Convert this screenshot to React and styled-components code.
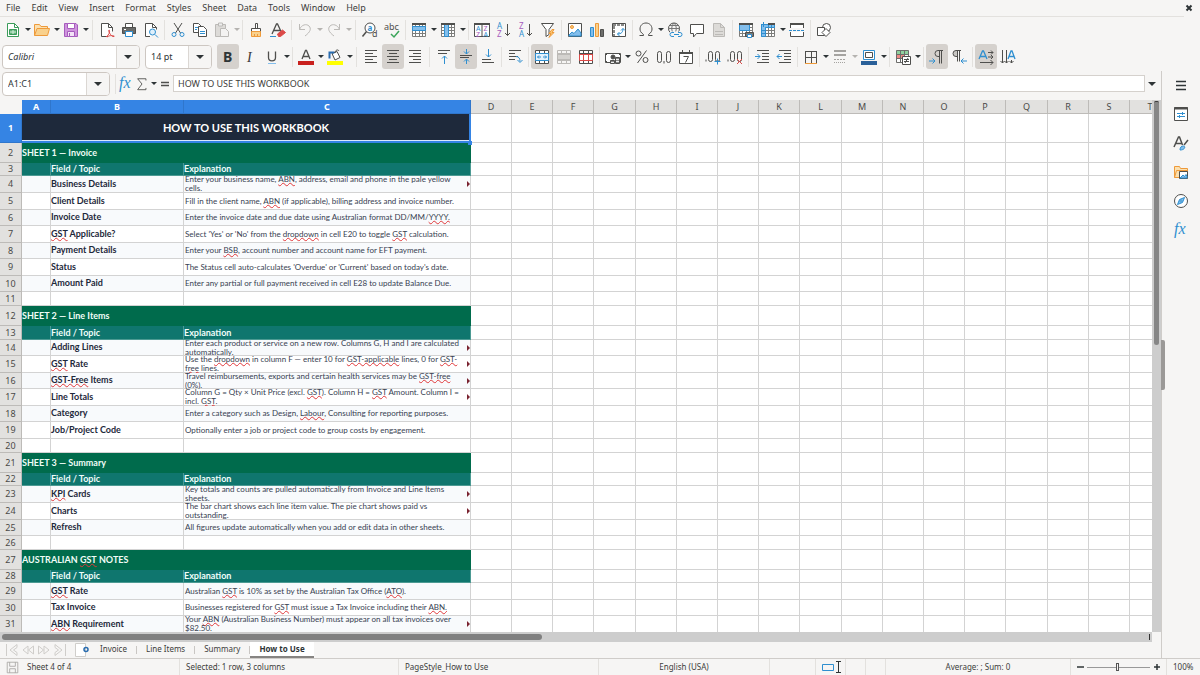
import React from "react";
import styled, { createGlobalStyle, css } from "styled-components";

const GlobalStyle = createGlobalStyle`
  * { box-sizing: border-box; }
  body { margin: 0; background: #f6f5f4; }
  button, input { font: inherit; color: inherit; }
`;

const INK = "#4f4f4d";
const BLUE = "#2f8fd0";
const SOFT = "#83beec";
const ORANGE = "#ee9a3a";
const PURPLE = "#a65cbd";
const RED = "#dc4a48";
const FADED = "#bcbab7";

/* ---------- icons ---------- */

const grid = (
  <path d="M1.5 2.5h13v12h-13zM1.5 5.5h13M1.5 8.5h13M1.5 11.5h13M4.5 2.5v12M8.5 2.5v12M11.5 2.5v12" stroke="#7d7d7b" />
);

const letter = (x, y, size, fill, text, extra) => (
  <text x={x} y={y} fontSize={size} fill={fill} stroke="none" fontFamily="'Noto Sans', sans-serif" {...extra}>
    {text}
  </text>
);

const icons = {
  newDoc: (
    <>
      <path d="M2.500 1.500h7l4 4v9h-11z" fill="#fff" stroke="#3b9c5a" />
      <path d="M9.500 1.500v4h4" stroke="#3b9c5a" />
      <path d="M4.500 7.500h7v5h-7z" fill="#5db077" stroke="#3b9c5a" />
      <path d="M5 10h6M8 8v4" stroke="#d7efdd" />
    </>
  ),
  open: (
    <>
      <path d="M.5 13.500v-11h5l1.500 2h6.500v3" fill="#fbe0b0" stroke={ORANGE} />
      <path d="M.5 13.500l2.500-7h12.500l-2 7z" fill="#f9d18d" stroke={ORANGE} />
    </>
  ),
  save: (
    <>
      <path d="M1.500 1.500h11.500l1.500 1.500v11.500h-13z" fill="#cf94dd" stroke={PURPLE} />
      <path d="M4.500 1.500h7v5h-7z" fill="#fff" stroke={PURPLE} />
      <path d="M4.500 9.500h7v5h-7z" fill="#f3e3f7" stroke={PURPLE} />
      <path d="M6.500 11v3" stroke={PURPLE} />
    </>
  ),
  pdf: (
    <>
      <path d="M9 14.500h-6.500v-13h7l4 4v4" fill="#fff" />
      <path d="M9.500 1.500v4h4" />
      <path d="M7 15c3-2 4-5 3.500-6.500s-1.500 0 0 2.500 3 4 4.500 3.500-4-2-7 .5" stroke={RED} />
    </>
  ),
  print: (
    <>
      <path d="M4.500 5.500v-4h7v4" fill="#fff" />
      <path d="M1.500 5.500h13v6h-13z" fill="#6a6a68" />
      <path d="M4.500 9.500h7v5h-7z" fill="#fff" stroke={BLUE} />
      <path d="M3 7.500h2" stroke="#fff" />
    </>
  ),
  preview: (
    <>
      <path d="M7 14.500h-4.500v-13h7l4 4v2" fill="#fff" />
      <path d="M9.500 1.500v4h4" />
      <circle cx="9.500" cy="10" r="3" fill="#dff0fc" stroke={BLUE} />
      <path d="M12 12.500l3 3" stroke={BLUE} />
    </>
  ),
  cut: (
    <>
      <path d="M4 1l6.500 10M12 1l-6.500 10" />
      <circle cx="4" cy="12.500" r="2" stroke={BLUE} />
      <circle cx="12" cy="12.500" r="2" stroke={BLUE} />
    </>
  ),
  copy: (
    <>
      <path d="M1.500 1.500h5l3 3v6h-8z" fill="#fff" />
      <path d="M3 5.500h3M3 7.500h2" stroke={BLUE} />
      <path d="M6.500 4.500h5l3 3v7h-8z" fill="#fff" />
      <path d="M8 9.500h5M8 11.500h5" stroke={BLUE} />
    </>
  ),
  paste: (
    <g stroke={FADED}>
      <path d="M1.500 2.500h10v12h-10z" fill="#dddbd8" />
      <path d="M4.500 1h4v3h-4z" fill="#eee" />
      <path d="M6.500 6.500h5l3 3v5h-8z" fill="#f4f3f2" />
    </g>
  ),
  brush: (
    <>
      <path d="M7.500 1.500h2v5h-2zM3.500 6.500h9v3h-9z" fill="#fff" />
      <path d="M3.500 9.500h9v5h-9z" fill="#f9d18d" stroke={ORANGE} />
      <path d="M6.500 12v2M9.500 12v2" stroke={ORANGE} />
    </>
  ),
  clear: (
    <>
      <path d="M2 12l4.500-10h1l3.500 7.500M4 8.500h6" strokeWidth="1.300" />
      <path d="M0 14.500h6" stroke={BLUE} />
      <path d="M7.500 12l5-4 3 2.500-5 4h-2z" fill={RED} stroke={RED} />
    </>
  ),
  undo: <path d="M2.500 2v5.500h5.500M2.500 7.500c2-5 7-6 9.500-3.500s1.500 6-4 10" stroke={FADED} />,
  redo: <path d="M13.500 2v5.500h-5.500M13.500 7.500c-2-5-7-6-9.500-3.500s-1.500 6 4 10" stroke={FADED} />,
  find: (
    <>
      <circle cx="8" cy="6" r="5" fill="#fff" />
      <path d="M4.500 9.500l-4 5" strokeWidth="1.500" />
      {letter(5.6, 8.500, 8, BLUE, "a", { fontWeight: 700 })}
      {letter(10, 15, 9, INK, "d")}
    </>
  ),
  spell: (
    <>
      {letter(0, 8, 9, INK, "abc")}
      <path d="M7 12l3 3 5-6" stroke="#3ba55a" strokeWidth="1.500" />
    </>
  ),
  rows: (
    <>
      <path d="M1 1.500h14v13h-14z" fill="#fff" stroke="none" />
      {grid}
      <path d="M1.500 4.500h13v4h-13z" fill={SOFT} stroke={BLUE} />
      <path d="M1 2h14" strokeWidth="2" />
    </>
  ),
  cols: (
    <>
      <path d="M1 1.500h14v13h-14z" fill="#fff" stroke="none" />
      {grid}
      <path d="M4.500 2.500h4v12h-4z" fill={SOFT} stroke={BLUE} />
      <path d="M1 2h14" strokeWidth="2" />
    </>
  ),
  sort: (
    <>
      <path d="M.5 1.500h15v13h-15zM8 1.500v13" fill="#fff" />
      <path d="M0 2h16" strokeWidth="2" />
      {letter(2, 8.500, 7, BLUE, "A")}
      {letter(2, 14.500, 7, PURPLE, "Z")}
      {letter(9.500, 8.500, 7, PURPLE, "Z")}
      {letter(9.500, 14.500, 7, BLUE, "A")}
    </>
  ),
  asc: (
    <>
      {letter(1, 7, 8, BLUE, "A")}
      {letter(1, 15, 8, PURPLE, "Z")}
      <path d="M11.500 2v11.500M9 11l2.500 2.500 2.500-2.500" />
    </>
  ),
  desc: (
    <>
      {letter(1, 7, 8, PURPLE, "Z")}
      {letter(1, 15, 8, BLUE, "A")}
      <path d="M11.500 2v11.500M9 11l2.500 2.500 2.500-2.500" />
    </>
  ),
  filter: (
    <>
      <path d="M1.500 1.500h12l-4.500 6v5l-3 2v-7z" fill="#fff" />
      <path d="M12 7.500l-3 4h2l-2 4 5-5h-2l2-3z" fill="#f9c97a" stroke={ORANGE} />
    </>
  ),
  image: (
    <>
      <path d="M1.500 1.500h13v13h-13z" fill="#fff" />
      <circle cx="5" cy="5" r="1.500" fill="#f9c97a" stroke={ORANGE} />
      <path d="M2 13l3-3 2 1.500 4-4.500 3 4v3h-12z" fill={SOFT} stroke={BLUE} />
    </>
  ),
  chart: (
    <>
      <path d="M1.500 5.500h3v9h-3z" fill={SOFT} stroke={BLUE} />
      <path d="M6.500 1.500h3v13h-3z" fill="#f9d18d" stroke={ORANGE} />
      <path d="M11.500 7.500h3v7h-3z" fill="#6d6d6b" />
    </>
  ),
  pivot: (
    <>
      <path d="M1.500 1.500h13v13h-13z" fill="#fff" />
      <path d="M2 3h12M3 4v10" stroke="#8a8a88" strokeWidth="2" strokeDasharray="3 1" />
      <path d="M6.500 12c4 0 5.500-2 5.500-5.500M10 8.500l2-2 2 2M8.500 10l-2 2 2 2" stroke={BLUE} />
    </>
  ),
  omega: <path d="M1.500 13.500h4v-1c-3-2-3.500-4-3.500-5.500 0-3.500 2.500-6 6-6s6 2.500 6 6c0 1.500-.5 3.500-3.500 5.500v1h4" />,
  link: (
    <>
      <circle cx="7" cy="6.500" r="5.500" />
      <path d="M1.500 6.500h11M7 1c-3 3-3 8 0 11M7 1c3 3 3 8 0 11M2.500 3.500h9" stroke="#777" />
      <path d="M3 9.500h12v6h-12z" fill="#f6f5f4" stroke="none" />
      <path d="M7 10.500h-2a2 2 0 0 0 0 4h2M7 12.500h5M11 10.500h2a2 2 0 0 1 0 4h-2" stroke={BLUE} />
    </>
  ),
  comment: <path d="M1.500 2.500h13v9h-7l-3 3.500v-3.500h-3z" fill="#fff" />,
  headers: (
    <g stroke={FADED}>
      <path d="M2.500 1.500h7l4 4v9h-11z" fill="#dddbd8" />
      <path d="M9.500 1.500v4h4M4 12.500h8M4 9.500h8" />
    </g>
  ),
  printArea: (
    <>
      <path d="M1.500 2.500h13v12h-13z" fill="#fff" stroke="none" />
      {grid}
      <path d="M1.500 2.500h10v6h-10z" fill={SOFT} stroke={BLUE} />
      <path d="M1 2h14" strokeWidth="2" />
      <path d="M7.500 10.500h8v4h-8z" fill="#777" />
      <path d="M9.500 12.500h4v3h-4z" fill="#fff" stroke={BLUE} />
    </>
  ),
  freeze: (
    <>
      <path d="M1.500 2.500h13v12h-13z" fill="#fff" stroke="none" />
      {grid}
      <path d="M1.500 2.500h13v3h-9v9h-4z" fill={SOFT} stroke={BLUE} />
      <path d="M8 2h7" strokeWidth="2" />
      <path d="M1 2.500h5M3.500 0v5M8.500 3v3M11.500 3v3M2 8.500h3M2 11.500h3" stroke={BLUE} />
    </>
  ),
  split: (
    <>
      <path d="M1.500 6v-4h13v4M1.500 10v4.500h13v-4.500" fill="#fff" />
      <path d="M1 2h14" strokeWidth="2" />
      <path d="M0 8.500h16" stroke={BLUE} strokeDasharray="3 1" />
    </>
  ),
  shapes: (
    <>
      <circle cx="10.500" cy="5.500" r="4" fill="#fff" />
      <path d="M1.500 5.500h7v8h-7z" fill="#fff" />
      <path d="M10 6.500l4 4-4 4-4-4z" fill="#fff" />
    </>
  ),
  bold: letter(3, 13, 14, "#2e3436", "B", { fontWeight: 700 }),
  italic: letter(5, 13, 14, "#3a3a3a", "I", { fontStyle: "italic", fontFamily: "'Liberation Serif', serif" }),
  underline: (
    <>
      <path d="M4.500 2.500v6c0 4.500 7 4.500 7 0v-6" strokeWidth="1.300" />
      <path d="M4 14.500h8" stroke={SOFT} />
    </>
  ),
  fontColor: (
    <>
      <path d="M4 10l3.500-8.500h1l3.500 8.500M5.500 7.500h5" strokeWidth="1.300" />
      <path d="M0 12h16v4h-16z" fill="#c9211e" stroke="none" />
    </>
  ),
  highlight: (
    <>
      <path d="M5 4.500l5-2 3 6-5 2.500z" fill="#fff" />
      <path d="M2.500 9.500v-6h5" stroke="#2a6db0" strokeWidth="2" />
      <path d="M8 4c0-3 3-4 4-2" />
      <path d="M0 12h16v4h-16z" fill="#ffff00" stroke="none" />
    </>
  ),
  alignLeft: <path d="M2 1.500h12M2 4.500h8M2 7.500h12M2 10.500h8M2 13.500h12" />,
  alignCenter: <path d="M2 1.500h12M4 4.500h8M2 7.500h12M4 10.500h8M2 13.500h12" />,
  alignRight: <path d="M2 1.500h12M6 4.500h8M2 7.500h12M6 10.500h8M2 13.500h12" />,
  alignTop: (
    <>
      <path d="M2 1.500h12M2 4.500h9" />
      <path d="M8.500 15v-8M6 9.500l2.500-2.500 2.500 2.500" stroke={BLUE} />
    </>
  ),
  alignMiddle: (
    <>
      <path d="M2 6.500h12M2 8.500h9" />
      <path d="M8.500 0v5M6 2.500l2.500 2.500 2.500-2.500M8.500 15v-5M6 12.500l2.500-2.500 2.500 2.500" stroke={BLUE} />
    </>
  ),
  alignBottom: (
    <>
      <path d="M2 10.500h9M2 13.500h12" />
      <path d="M8.500 0v8M6 5.500l2.500 2.500 2.500-2.500" stroke={BLUE} />
    </>
  ),
  wrap: (
    <>
      <path d="M2 1.500h12M2 4.500h6M2 7.500h9M2 10.500h6" />
      <path d="M9 7.500c3 0 4 2 4 5M10.500 11l2.500 2.500 2.500-2.500" stroke={BLUE} />
    </>
  ),
  merge: (
    <>
      <path d="M1 1.500h14v13h-14z" fill="#fff" stroke="none" />
      <path d="M1.500 1.500h13v13h-13zM1.500 4.500h13M1.500 11.500h13M5.500 1.500v3M10.500 1.500v3M5.500 11.500v3M10.500 11.500v3" />
      <path d="M1.500 4.500h13v7h-13z" fill="#e4f2fd" stroke={BLUE} />
      <path d="M3.500 8h3.500M9 8h3.500M5 6.500l-1.500 1.500 1.500 1.500M11 6.500l1.500 1.500-1.500 1.500" stroke={BLUE} />
    </>
  ),
  mergeOff: (
    <g stroke={FADED}>
      <path d="M1.500 5.500h13v5h-13z" fill="#d4d2cf" />
      <path d="M1.500 1.500h13v13h-13zM1.500 4.500h13M1.500 11.500h13M5.500 1.500v3M10.500 1.500v3M5.500 11.500v3M10.500 11.500v3" />
    </g>
  ),
  unmerge: (
    <>
      <path d="M1.500 1.500h13v13h-13zM1.500 4.500h13M1.500 11.500h13M5.500 1.500v3M10.500 1.500v3M5.500 11.500v3M10.500 11.500v3" fill="#fff" />
      <path d="M1.500 5.500h13v6h-13zM5.500 5.500v6M10.500 5.500v6" stroke={RED} />
    </>
  ),
  currency: (
    <>
      <path d="M.5 4.500h15v9h-15z" fill="#fff" />
      <path d="M.5 6.500l2-2M13.500 4.500l2 2M.5 11.500l2 2" />
      <circle cx="8" cy="8" r="2" fill={INK} />
      <path d="M5.500 11.500h4v3h-4zM10.500 8.500h4v6h-4z" fill="#888" />
      <path d="M11 10.500h3M11 12.500h3M6 13.500h3" stroke="#eee" />
    </>
  ),
  percent: (
    <>
      <circle cx="4.500" cy="4.500" r="2.500" />
      <circle cx="11.500" cy="11" r="2.500" />
      <path d="M12.500 1.500l-9 12.500" />
    </>
  ),
  decimal: (
    <>
      <rect x="1.500" y="2.500" width="4" height="11" rx="2" />
      <rect x="10.500" y="2.500" width="4" height="11" rx="2" />
      <path d="M8 12v2.500" />
    </>
  ),
  date: (
    <>
      <path d="M1.500 3.500h13v11h-13z" fill="#fff" />
      <path d="M1 4h14" strokeWidth="2" />
      <path d="M4.500 1v3M11.500 1v3M5.500 7.500h5l-3 6" />
    </>
  ),
  addDecimal: (
    <>
      <path d="M1 10.500v2" />
      <rect x="3.500" y="2.500" width="4" height="10" rx="2" />
      <rect x="10.500" y="2.500" width="4" height="10" rx="2" />
      <path d="M12.500 9.500v6M9.500 12.500h6" stroke={BLUE} />
    </>
  ),
  removeDecimal: (
    <>
      <path d="M1 10.500v2" />
      <rect x="3.500" y="2.500" width="4" height="10" rx="2" />
      <rect x="10.500" y="2.500" width="4" height="10" rx="2" />
      <path d="M10 10l5 5M15 10l-5 5" stroke={RED} />
    </>
  ),
  indent: (
    <>
      <path d="M3 1.500h12M8 4.500h7M8 7.500h7M8 10.500h7M3 13.500h12" />
      <path d="M1 7.500h5M3.500 5l2.500 2.500-2.500 2.500" stroke={BLUE} />
    </>
  ),
  outdent: (
    <>
      <path d="M3 1.500h12M8 4.500h7M8 7.500h7M8 10.500h7M3 13.500h12" />
      <path d="M6 7.500h-5M3.500 5l-2.500 2.500 2.500 2.500" stroke={BLUE} />
    </>
  ),
  borders: (
    <>
      <path d="M2 2.500h12M2.500 2v12M13.500 2v12M8.500 2v12M2 8.500h12" />
      <path d="M2 14.500h12" stroke={ORANGE} />
    </>
  ),
  lineStyle: (
    <g stroke="#a5a3a0">
      <path d="M2 2h12M2 6h12" strokeWidth="2" />
      <path d="M2 10.500h12" strokeDasharray="2 1" />
      <path d="M2 13.500h12" strokeDasharray="1 1" />
    </g>
  ),
  borderColor: (
    <>
      <path d="M2.500 1.500h11v9h-11z" fill="#fff" stroke={BLUE} />
      <path d="M4.500 3.500h7v5h-7z" fill="#fff" />
      <path d="M0 12h16v4h-16z" fill="#2a6099" stroke="none" />
    </>
  ),
  conditional: (
    <>
      <path d="M1 1.500h13v12h-13z" fill="#fff" stroke="none" />
      <path d="M1 1.500h13v4h-13z" fill="#8fd19e" stroke="none" />
      <path d="M1 5.500h9v4h-9z" fill="#ef8a86" stroke="none" />
      <path d="M1.500 1.500h12v12h-12zM1.500 5.500h12M1.500 9.500h12M5.500 1.500v12M9.500 1.500v12" stroke="#6d6d6b" />
      <path d="M7.500 7.500h8v8h-8z" fill="#fff" />
      <path d="M9 10.500h5M9 12.500h5M13 9l-3 5" />
    </>
  ),
  ltr: (
    <>
      <path d="M14 1.500h-5a3 3 0 0 0 0 6h1.500M10.500 1.500v13M12.500 1.500v13" />
      <path d="M0 12h6M3.500 9.500l2.500 2.500-2.500 2.500" stroke={BLUE} />
    </>
  ),
  rtl: (
    <>
      <path d="M5 1.500a3 3 0 0 0 0 6h1.500v-6z" fill="#c8c6c3" />
      <path d="M10 1.500h-5M6.500 1.500v11M8.500 1.500v11" />
      <path d="M16 12h-6M12.500 9.500l-2.500 2.500 2.500 2.500" stroke={BLUE} />
    </>
  ),
  textLtr: (
    <>
      <path d="M1 10l3.500-8h1l3.500 8M2.500 7.500h5" stroke={BLUE} strokeWidth="1.300" />
      <path d="M10 3.500h5M13 1.500l2 2-2 2M10 8h5M13 6l2 2-2 2M2 13.500h13M12.500 11l2.500 2.500-2.500 2.500" />
    </>
  ),
  textTtb: (
    <>
      <path d="M8 10l3-8h1l3 8M9 7.500h5" stroke={BLUE} strokeWidth="1.300" />
      <path d="M2.500 1v13M.5 12l2 2 2-2M6.500 1v13M4.500 12l2 2 2-2M11.500 11v3M9.500 12l2 2 2-2" />
    </>
  ),
  fx: letter(1, 12, 16, BLUE, "fx", { fontStyle: "italic", fontFamily: "'Liberation Serif', serif" }),
  sum: <path d="M12.500 4v-2h-9.500l5 6-5 6.500h9.500v-2" />,
  equals: <path d="M4 6.500h8M4 9.500h8" strokeWidth="1.500" />,
  menu: <path d="M3 4.500h10M3 8.500h10M3 12.500h10" stroke="#2e3436" strokeWidth="1.500" />,
  properties: (
    <>
      <path d="M1.500 1.500h13v13h-13z" fill="#fff" />
      <path d="M1 2.500h14" strokeWidth="2" />
      <path d="M4 7.500h8M4 10.500h8M9.500 6v3M6.500 9v3" stroke={BLUE} />
    </>
  ),
  styles: (
    <>
      <path d="M1 12l4.500-10h1l3 8M3 8.500h6" strokeWidth="1.500" />
      <path d="M7 15c0-3 1.500-4 3.500-4s2 4-3.500 4z" fill={SOFT} stroke={BLUE} />
      <path d="M15 5l-4 5" strokeWidth="1.500" />
    </>
  ),
  gallery: (
    <>
      <path d="M1.500 13.500v-11h5l1 2h7v9z" fill="#fbe0b0" stroke={ORANGE} />
      <path d="M1.500 13.500l2-7h11" stroke={ORANGE} />
      <path d="M6.500 7.500h8v7h-8z" fill="#fff" />
      <path d="M7 14l3-3 1.500 1.500 1.500-2 1 2v1.500z" fill={SOFT} stroke={BLUE} />
    </>
  ),
  navigator: (
    <>
      <circle cx="8" cy="8" r="6.500" fill="#fff" />
      <path d="M11.500 4.500l-2 5-5 2 2-5z" fill={SOFT} stroke={BLUE} />
      <circle cx="8" cy="8" r="1" fill="#fff" stroke={BLUE} />
    </>
  ),
  addSheet: (
    <>
      <path d="M.5 1.500h10v13h-10z" fill="#fff" stroke="#d0cecb" />
      <circle cx="11" cy="7.500" r="2" stroke="#2a6db0" strokeWidth="1.500" />
    </>
  ),
  first: <path d="M2.500 2v12M13 2.500l-7 5.500 7 5.500v-3l-3.500-2.500 3.500-2.500z" stroke="#cfcdca" />,
  prev: <path d="M8 4l-5 4 5 4zM13.500 4l-5 4 5 4z" stroke="#cfcdca" />,
  next: <path d="M8 4l5 4-5 4zM2.500 4l5 4-5 4z" stroke="#cfcdca" />,
  last: <path d="M13.500 2v12M3 2.500l7 5.500-7 5.500v-3l3.500-2.500-3.500-2.500z" stroke="#cfcdca" />,
  saved: <path d="M1.500 1.500h13v13h-13zM4.500 1.500v5h7v-5M4.500 14.500v-5h7v5" stroke="#a5a3a0" />,
  close: <path d="M5.500 5.500l5 5M10.500 5.500l-5 5" stroke="#2e3436" strokeWidth="2" />,
};

const Svg = styled.svg`
  display: block;
  flex: none;
  fill: none;
  stroke: ${INK};
  stroke-width: 1;
  overflow: visible;
`;

const Icon = ({ name, size = 16 }) => (
  <Svg width={size} height={size} viewBox="0 0 16 16" aria-hidden="true">
    {icons[name]}
  </Svg>
);

const Caret = styled.span`
  width: 0;
  height: 0;
  border: ${(p) => (p.$big ? 4 : 3)}px solid transparent;
  border-bottom: 0;
  border-top-color: ${(p) => (p.$off ? "#b5b3b0" : "#2e3436")};
`;

/* ---------- shell ---------- */

const Shell = styled.div`
  display: flex;
  flex-direction: column;
  height: 100vh;
  overflow: hidden;
  background: #f6f5f4;
  color: #3d3d3b;
  font: 9px/12px "Noto Sans", sans-serif;
`;

const MenuBar = styled.nav`
  display: flex;
  align-items: center;
  height: 17px;
  flex: none;
  margin-right: 16px;
  padding-left: 1px;
  border-bottom: 1px solid #e3e1de;
`;

const MenuItem = styled.button`
  border: 0;
  padding: 0 6px 0 5px;
  background: none;
`;

const CloseButton = styled.button`
  display: flex;
  margin: 0 -13px 0 auto;
  padding: 0;
  border: 0;
  background: none;
`;

const ToolBar = styled.div`
  display: flex;
  align-items: center;
  height: 27px;
  flex: none;
  padding: 0 0 2px 2px;
`;

const ToolButton = styled.button`
  display: flex;
  align-items: center;
  justify-content: center;
  width: 22px;
  height: 25px;
  flex: none;
  padding: 0;
  border: 0;
  border-radius: 3px;
  background: ${(p) => (p.$on ? "#d5d1cd" : "none")};
`;

const DropButton = styled(ToolButton)`
  width: 7px;
`;

const Divider = styled.span`
  width: 1px;
  height: 20px;
  flex: none;
  margin: 0 ${(p) => (p.$wide ? 3 : 2)}px;
  background: #e3e1de;
`;

const ComboBox = styled.div`
  display: flex;
  width: ${(p) => p.$width}px;
  height: 24px;
  flex: none;
  margin-right: ${(p) => p.$gap}px;
  border: 1px solid #cdc7c2;
  border-radius: 4px;
  background: #fff;
  overflow: hidden;
`;

const ComboInput = styled.input`
  flex: 1;
  min-width: 0;
  padding: 0 5px;
  border: 0;
  outline: 0;
  background: none;
  color: #2e3436;
  font-style: ${(p) => (p.$italic ? "italic" : "normal")};
`;

const ComboArrow = styled.button`
  display: flex;
  align-items: center;
  justify-content: center;
  width: 23px;
  padding: 0;
  border: 0;
  border-left: 1px solid #dbd7d3;
  background: #f6f5f4;
`;

const Combo = ({ label, value, width, gap, italic }) => (
  <ComboBox $width={width} $gap={gap}>
    <ComboInput aria-label={label} defaultValue={value} $italic={italic} />
    <ComboArrow aria-label={`${label} list`}>
      <Caret $big />
    </ComboArrow>
  </ComboBox>
);

// "|" is a divider, "||" a wider one; a trailing ">" adds the drop arrow,
// "*" marks a pressed button and "-" a disabled arrow
const standardTools =
  "newDoc> open> save> || pdf print preview | cut copy paste>- | brush clear | undo>- redo>- || find spell | rows> cols> | sort asc desc filter | image chart pivot | omega> link comment headers | printArea freeze> split | shapes";
const formatTools =
  "bold* italic underline> | fontColor> highlight> || alignLeft alignCenter* alignRight || alignTop alignMiddle* alignBottom | wrap | merge* mergeOff unmerge | currency> percent decimal date | addDecimal removeDecimal | indent outdent | borders> lineStyle>- borderColor> | conditional> | ltr* rtl | textLtr* textTtb";

const Tools = ({ list }) =>
  list.split(" ").map((token, i) => {
    if (token[0] === "|") return <Divider key={i} $wide={token === "||"} />;
    const name = token.replace(/\W/g, "");
    return (
      <React.Fragment key={i}>
        <ToolButton aria-label={name} $on={token.includes("*")}>
          <Icon name={name} />
        </ToolButton>
        {token.includes(">") && (
          <DropButton aria-label={`${name} options`}>
            <Caret $off={token.endsWith("-")} />
          </DropButton>
        )}
      </React.Fragment>
    );
  });

const Middle = styled.div`
  display: flex;
  flex: 1;
  min-height: 0;
`;

const Workspace = styled.main`
  display: flex;
  flex-direction: column;
  flex: 1;
  min-width: 0;
`;

const FormulaBar = styled.div`
  display: flex;
  align-items: center;
  height: 29px;
  flex: none;
  padding: 0 4px 4px 2px;
`;

const FormulaButton = styled(ToolButton)`
  width: 16px;
`;

const FormulaInput = styled.input`
  flex: 1;
  min-width: 0;
  height: 17px;
  margin-right: 2px;
  padding: 0 4px;
  border: 1px solid #d5d1cd;
  outline: 0;
  background: #fff;
`;

const ExpandButton = styled(ToolButton)`
  width: 10px;
`;

/* ---------- sheet ---------- */

const SheetFrame = styled.div`
  display: grid;
  grid-template: minmax(0, 1fr) 10px / minmax(0, 1fr) 9px;
  flex: 1;
  min-height: 0;
`;

const Viewport = styled.div`
  overflow: hidden;
  background: #fff;
`;

const Grid = styled.table`
  table-layout: fixed;
  width: 0;
  border-collapse: separate;
  border-spacing: 0;

  thead th {
    height: 14px;
  }
`;

const Corner = styled.td`
  padding: 0;
  background: #f6f5f4;
`;

const Heading = styled.th`
  padding: 0;
  border-right: 1px solid ${(p) => (p.$on ? "#2f76cc" : "#bdbbb8")};
  border-bottom: 1px solid ${(p) => (p.$on ? "#2f76cc" : "#bdbbb8")};
  background: ${(p) => (p.$on ? "#3584e4" : "#e2e1df")};
  color: ${(p) => (p.$on ? "#fff" : "#4a4a48")};
  line-height: 12px;
  font-weight: ${(p) => (p.$on ? 700 : 400)};
  text-align: center;
`;

const tones = {
  title: css`
    background: #1e293b;
    color: #fff;
    font-size: 11px;
    font-weight: 700;
  `,
  section: css`
    background: #006b4c;
    color: #f0fdf7;
    font-size: 9px;
    font-weight: 700;
    border-color: #006b4c;
  `,
  head: css`
    background: #0f766e;
    color: #f0fdfa;
    font-size: 9px;
    font-weight: 700;
    border-color: #4c9a93;
  `,
  tint: css`
    background: #f8fafc;
  `,
};

const Cell = styled.td`
  position: relative;
  padding: 0;
  border-right: 1px solid #d3d3d3;
  border-bottom: 1px solid #d3d3d3;
  color: #374151;
  font-family: Lato, sans-serif;
  ${(p) => tones[p.$tone]}
`;

const CellBody = styled.div`
  display: flex;
  align-items: center;
  justify-content: ${(p) => (p.$center ? "center" : "flex-start")};
  height: ${(p) => p.$h - 1}px;
  white-space: pre;
`;

const Topic = styled(CellBody)`
  padding-bottom: 1px;
  color: #1e293b;
  font-size: 9px;
  font-weight: 700;
`;

const Note = styled(CellBody)`
  padding-left: 1px;
  font-size: 8px;
  line-height: 9px;
`;

const Misspelt = styled.span`
  text-decoration: underline wavy #e0383a 1px;
  text-decoration-skip-ink: none;
  text-underline-offset: 0;
`;

const MoreMark = styled.span`
  position: absolute;
  right: 0;
  top: 5px;
  border: 3px solid transparent;
  border-right: 0;
  border-left-color: #7a2330;
`;

const Selection = styled.span`
  position: absolute;
  inset: 0 -1px -1px 0;
  border: solid #3584e4;
  border-width: 0 2px 2px 0;
  box-shadow: inset 0 -1px #dbe9fb;
  pointer-events: none;
`;

const FillHandle = styled.span`
  position: absolute;
  right: -2px;
  bottom: -3px;
  z-index: 1;
  width: 4px;
  height: 4px;
  background: #3584e4;
`;

// words between tildes carry the spelling underline
const spell = (text) => text.split("~").map((part, i) => (i % 2 ? <Misspelt key={i}>{part}</Misspelt> : part));

const rows = [
  { h: 29, title: "HOW TO USE THIS WORKBOOK" },
  { h: 20, section: "SHEET 1 — Invoice" },
  { h: 13, head: true },
  { h: 17, topic: "Business Details", note: "Enter your business name, ~ABN~, address, email and phone in the pale yellow\ncells.", tint: true },
  { h: 17, topic: "Client Details", note: "Fill in the client name, ~ABN~ (if applicable), billing address and invoice number." },
  { h: 16, topic: "Invoice Date", note: "Enter the invoice date and due date using Australian format DD/MM/~YYYY.~", tint: true },
  { h: 17, topic: "~GST~ Applicable?", note: "Select 'Yes' or 'No' from the ~dropdown~ in cell E20 to toggle ~GST~ calculation." },
  { h: 16, topic: "Payment Details", note: "Enter your ~BSB~, account number and account name for EFT payment.", tint: true },
  { h: 17, topic: "Status", note: "The Status cell auto-calculates 'Overdue' or 'Current' based on today's date." },
  { h: 16, topic: "Amount Paid", note: "Enter any partial or full payment received in cell E28 to update Balance Due.", tint: true },
  { h: 14 },
  { h: 20, section: "SHEET 2 — Line Items" },
  { h: 14, head: true },
  { h: 16, topic: "Adding Lines", note: "Enter each product or service on a new row. Columns G, H and I are calculated\nautomatically.", tint: true },
  { h: 17, topic: "~GST~ Rate", note: "Use the ~dropdown~ in column F — enter 10 for ~GST-applicable~ lines, 0 for ~GST-~\n~free~ lines." },
  { h: 16, topic: "~GST-Free~ Items", note: "Travel reimbursements, exports and certain health services may be ~GST-free~\n(0%).", tint: true },
  { h: 17, topic: "Line Totals", note: "Column G = Qty × Unit Price (excl. ~GST~). Column H = ~GST~ Amount. Column I =\nincl. ~GST.~" },
  { h: 16, topic: "Category", note: "Enter a category such as Design, ~Labour~, Consulting for reporting purposes.", tint: true },
  { h: 17, topic: "Job/Project Code", note: "Optionally enter a job or project code to group costs by engagement." },
  { h: 14 },
  { h: 20, section: "SHEET 3 — Summary" },
  { h: 13, head: true },
  { h: 17, topic: "~KPI~ Cards", note: "Key totals and counts are pulled automatically from Invoice and Line Items\nsheets.", tint: true },
  { h: 17, topic: "Charts", note: "The bar chart shows each line item value. The pie chart shows paid vs\noutstanding." },
  { h: 16, topic: "Refresh", note: "All figures update automatically when you add or edit data in other sheets.", tint: true },
  { h: 14 },
  { h: 20, section: "AUSTRALIAN ~GST~ NOTES" },
  { h: 13, head: true },
  { h: 17, topic: "~GST~ Rate", note: "Australian ~GST~ is 10% as set by the Australian Tax Office (~ATO~).", tint: true },
  { h: 16, topic: "Tax Invoice", note: "Businesses registered for ~GST~ must issue a Tax Invoice including their ~ABN.~" },
  { h: 17, topic: "~ABN~ Requirement", note: "Your ~ABN~ (Australian Business Number) must appear on all tax invoices over\n$82.50.", tint: true },
];

const extraColumns = "DEFGHIJKLMNOPQRSTUVWXYZ".split("");

const RowCells = ({ row }) => {
  const { h } = row;
  if (row.title) {
    return (
      <Cell colSpan={3} $tone="title">
        <CellBody $h={h} $center>{row.title}</CellBody>
        <Selection />
        <FillHandle />
      </Cell>
    );
  }
  if (row.section) {
    return (
      <Cell colSpan={3} $tone="section">
        <CellBody $h={h}>{spell(row.section)}</CellBody>
      </Cell>
    );
  }
  if (row.head) {
    return (
      <>
        <Cell $tone="head" />
        <Cell $tone="head"><CellBody $h={h}>Field / Topic</CellBody></Cell>
        <Cell $tone="head"><CellBody $h={h}>Explanation</CellBody></Cell>
      </>
    );
  }
  const tone = row.tint ? "tint" : undefined;
  return (
    <>
      <Cell $tone={tone}><CellBody $h={h} /></Cell>
      <Cell $tone={tone}>{row.topic && <Topic $h={h}><span>{spell(row.topic)}</span></Topic>}</Cell>
      <Cell $tone={tone}>
        {row.note && <Note $h={h}><span>{spell(row.note)}</span></Note>}
        {row.note && row.note.includes("\n") && <MoreMark />}
      </Cell>
    </>
  );
};

const Spreadsheet = () => (
  <Grid>
    <colgroup>
      <col width={22} />
      <col width={29} />
      <col width={133} />
      <col width={287} />
      {extraColumns.map((name, i) => (
        <col key={name} width={i % 5 === 3 ? 42 : 41} />
      ))}
    </colgroup>
    <thead>
      <tr>
        <Corner />
        {["A", "B", "C"].map((name) => (
          <Heading key={name} scope="col" $on>{name}</Heading>
        ))}
        {extraColumns.map((name) => (
          <Heading key={name} scope="col">{name}</Heading>
        ))}
      </tr>
    </thead>
    <tbody>
      {rows.map((row, i) => (
        <tr key={i}>
          <Heading scope="row" $on={i === 0}>
            <CellBody $h={row.h} $center>{i + 1}</CellBody>
          </Heading>
          <RowCells row={row} />
          {extraColumns.map((name) => (
            <Cell key={name} />
          ))}
        </tr>
      ))}
    </tbody>
  </Grid>
);

const VerticalTrack = styled.div`
  padding: 1px 1px 0;
  background: #cdcdcd;
`;

const VerticalThumb = styled.div`
  height: 46%;
  border-top: 1px solid #3a3a3a;
  border-radius: 2px 2px 3px 3px;
  margin: 0 1px;
  background: #868686;
`;

const HorizontalTrack = styled.div`
  display: flex;
  align-items: center;
  justify-content: space-between;
  padding: 0 2px;
  background: #cdcdcd;
`;

const HorizontalThumb = styled.div`
  width: 47%;
  height: 6px;
  border-radius: 3px;
  background: #808080;
`;

const SplitGrip = styled.span`
  width: 1px;
  height: 6px;
  background: #333;
`;

const TabBar = styled.div`
  display: flex;
  align-items: stretch;
  height: 16px;
  flex: none;
  padding-left: 4px;
  font-size: 8px;
`;

const TabNav = styled.button`
  display: flex;
  align-items: center;
  padding: 0;
  border: 0;
  background: none;
`;

const AddSheet = styled(TabNav)`
  margin-left: 7px;
`;

const Tab = styled.button`
  padding: 0 9px;
  border: 0;
  border-bottom: 2px solid ${(p) => (p.$on ? "#868482" : "transparent")};
  background: ${(p) => (p.$on ? "#fff" : "none")};
  font-weight: ${(p) => (p.$on ? 700 : 400)};
  color: ${(p) => (p.$on ? "#2e3436" : "#3d3d3b")};
`;

const TabDivider = styled.span`
  width: 1px;
  height: 8px;
  align-self: center;
  background: #c9c6c3;
`;

const SideBar = styled.aside`
  display: flex;
  flex-direction: column;
  align-items: center;
  position: relative;
  width: 39px;
  flex: none;
  gap: 13px;
  padding-top: 6px;
  border-left: 1px solid #cfccc9;
`;

const SideButton = styled.button`
  display: flex;
  padding: 0;
  border: 0;
  background: none;
`;

const SideHandle = styled.span`
  position: absolute;
  left: -1px;
  top: 50%;
  width: 4px;
  height: 50px;
  margin-top: -25px;
  border-radius: 0 2px 2px 0;
  background: #9b9997;
`;

const StatusBar = styled.footer`
  display: grid;
  grid-template-columns: 180fr 219fr 200fr 171fr 46fr 30fr 20fr 20fr 185fr 96fr 33fr;
  height: 17px;
  flex: none;
  border-top: 1px solid #cfccc9;
  font-size: 8px;
`;

const Status = styled.div`
  display: flex;
  align-items: center;
  justify-content: ${(p) => (p.$center ? "center" : "flex-start")};
  gap: 8px;
  min-width: 0;
  padding: 0 6px;
  border-right: 1px solid #e3e1de;
  white-space: nowrap;

  &:last-child {
    border-right: 0;
  }
`;

const ZoomStatus = styled(Status)`
  gap: 1px;
  padding: 0 3px;
`;

const ZoomButton = styled.button`
  display: flex;
  padding: 0;
  border: 0;
  background: none;
`;

const ZoomRange = styled.input`
  flex: 1;
  min-width: 0;
  height: 8px;
  margin: 0;
  appearance: none;
  background: linear-gradient(#999, #999) center / 100% 1px no-repeat;

  &::-webkit-slider-thumb {
    appearance: none;
    width: 3px;
    height: 8px;
    border: 1px solid #555;
    background: #f6f5f4;
  }
`;

const menus = ["File", "Edit", "View", "Insert", "Format", "Styles", "Sheet", "Data", "Tools", "Window", "Help"];

export default function App() {
  return (
    <Shell>
      <GlobalStyle />
      <MenuBar>
        {menus.map((name) => (
          <MenuItem key={name}>{name}</MenuItem>
        ))}
        <CloseButton aria-label="Close">
          <Icon name="close" />
        </CloseButton>
      </MenuBar>
      <ToolBar>
        <Tools list={standardTools} />
      </ToolBar>
      <ToolBar>
        <Combo label="Font name" value="Calibri" width={138} gap={5} italic />
        <Combo label="Font size" value="14 pt" width={67} gap={5} />
        <Tools list={formatTools} />
      </ToolBar>
      <Middle>
        <Workspace>
          <FormulaBar>
            <Combo label="Name box" value="A1:C1" width={108} gap={3} />
            <Divider />
            <FormulaButton aria-label="Function wizard"><Icon name="fx" /></FormulaButton>
            <FormulaButton aria-label="Sum"><Icon name="sum" size={14} /></FormulaButton>
            <DropButton aria-label="Sum options"><Caret /></DropButton>
            <FormulaButton aria-label="Formula"><Icon name="equals" /></FormulaButton>
            <FormulaInput aria-label="Input line" defaultValue="HOW TO USE THIS WORKBOOK" />
            <ExpandButton aria-label="Expand input line"><Caret $big /></ExpandButton>
          </FormulaBar>
          <SheetFrame>
            <Viewport>
              <Spreadsheet />
            </Viewport>
            <VerticalTrack>
              <VerticalThumb />
            </VerticalTrack>
            <HorizontalTrack>
              <HorizontalThumb />
              <SplitGrip />
            </HorizontalTrack>
          </SheetFrame>
          <TabBar>
            {["first", "prev", "next", "last"].map((name) => (
              <TabNav key={name} aria-label={`${name} sheet`}><Icon name={name} /></TabNav>
            ))}
            <AddSheet aria-label="Add sheet"><Icon name="addSheet" /></AddSheet>
            <Tab>Invoice</Tab>
            <TabDivider />
            <Tab>Line Items</Tab>
            <TabDivider />
            <Tab>Summary</Tab>
            <TabDivider />
            <Tab $on>How to Use</Tab>
          </TabBar>
        </Workspace>
        <SideBar>
          {["menu", "properties", "styles", "gallery", "navigator", "fx"].map((name) => (
            <SideButton key={name} aria-label={name}><Icon name={name} /></SideButton>
          ))}
          <SideHandle />
        </SideBar>
      </Middle>
      <StatusBar>
        <Status><Icon name="saved" size={13} />Sheet 4 of 4</Status>
        <Status>Selected: 1 row, 3 columns</Status>
        <Status>PageStyle_How to Use</Status>
        <Status $center>English (USA)</Status>
        <Status />
        <Status>
          <Svg width="20" height="12" viewBox="0 0 20 12" aria-hidden="true">
            <path d="M.5 3.500h11v6h-11z" stroke={BLUE} />
            <path d="M14 .5h5M16.500 .5v11M14 11.500h5" stroke="#2e3436" />
          </Svg>
        </Status>
        <Status />
        <Status />
        <Status $center>Average: ; Sum: 0</Status>
        <ZoomStatus>
          <ZoomButton aria-label="Zoom out">
            <Svg width="12" height="12" viewBox="0 0 12 12"><path d="M3 6h7" stroke="#2e3436" strokeWidth="1.500" /></Svg>
          </ZoomButton>
          <ZoomRange type="range" aria-label="Zoom" defaultValue={49} />
          <ZoomButton aria-label="Zoom in">
            <Svg width="12" height="12" viewBox="0 0 12 12"><path d="M3 6h6M6 3v6" stroke="#2e3436" strokeWidth="1.500" /></Svg>
          </ZoomButton>
        </ZoomStatus>
        <Status>100%</Status>
      </StatusBar>
    </Shell>
  );
}
